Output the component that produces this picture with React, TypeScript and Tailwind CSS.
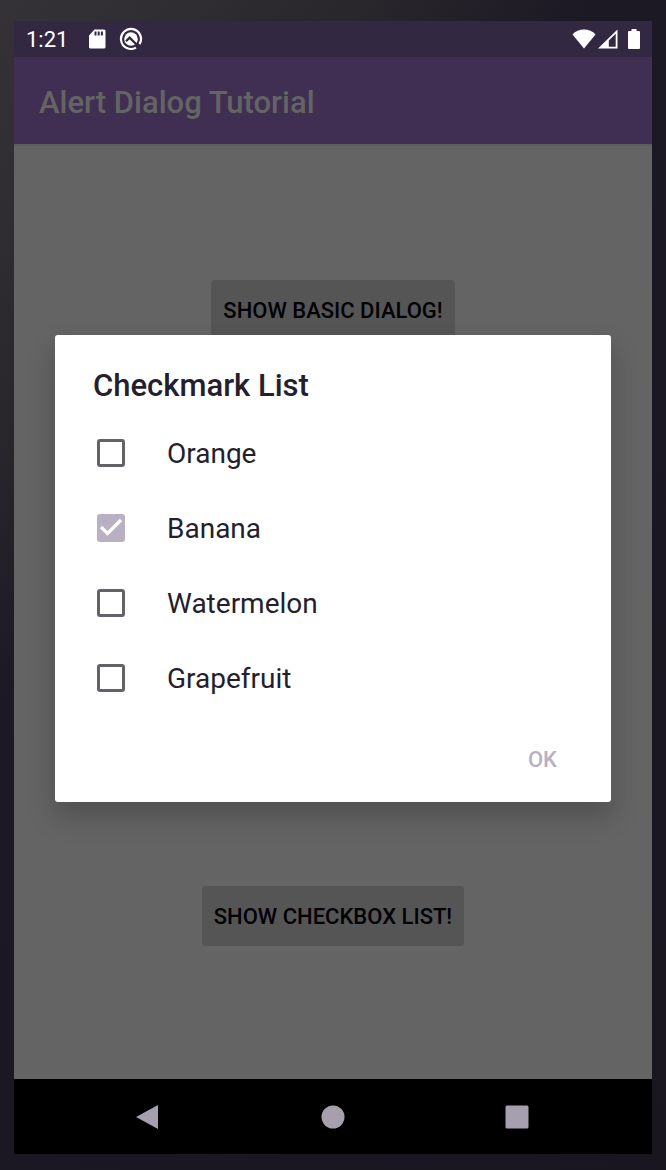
import React from "react";

const fruits = [
  { name: "Orange", checked: false },
  { name: "Banana", checked: true },
  { name: "Watermelon", checked: false },
  { name: "Grapefruit", checked: false },
];

function StatusBar() {
  return (
    <div className="flex h-9 items-center justify-between bg-[#332842] px-3 text-white">
      <div className="flex items-center">
        <span className="pt-0.5 text-[22px] leading-9">1:21</span>
        <svg className="ml-5 h-5 w-[18px]" viewBox="0 0 18 20" fill="currentColor" aria-hidden="true">
          <path
            fillRule="evenodd"
            d="M6.500 0.500H16a1.500 1.500 0 0 1 1.500 1.500V18a1.500 1.500 0 0 1-1.500 1.500H2.500A1.500 1.500 0 0 1 1 18V6.500zM6.500 2.500v4h2v-4zM9.700 2.500v4h2v-4zM12.900 2.500v4h2v-4z"
          />
        </svg>
        <svg className="ml-[13px] h-6 w-6" viewBox="0 0 24 24" fill="none" stroke="currentColor" aria-hidden="true">
          <path d="M17 20.600A10 10 0 1 1 20.500 17.200" strokeWidth="2.200" />
          <circle cx="12" cy="12" r="6.800" fill="currentColor" stroke="none" />
          <path d="M7 14.200L10.600 10.600L20 20" stroke="#332842" strokeWidth="2.200" />
        </svg>
      </div>
      <div className="flex items-center">
        <svg className="h-5 w-6" viewBox="0 0 24 20" fill="currentColor" aria-hidden="true">
          <path d="M12 19.500L0.500 5.500C3.500 2.300 7.500 0.500 12 0.500s8.500 1.800 11.500 5z" />
        </svg>
        <svg className="ml-0.5 h-5 w-5" viewBox="0 0 20 20" fill="currentColor" aria-hidden="true">
          <path fillRule="evenodd" d="M0 19.500L19.500 0.500V19.500zM10.800 11.500V17.700H17.700V4.800z" />
        </svg>
        <svg className="ml-2.5 h-5 w-3" viewBox="0 0 12 20" fill="currentColor" aria-hidden="true">
          <path d="M3.500 0h5v2H11a1 1 0 0 1 1 1v16a1 1 0 0 1-1 1H1a1 1 0 0 1-1-1V3a1 1 0 0 1 1-1h2.500z" />
        </svg>
      </div>
    </div>
  );
}

function ActionButton({ children }: { children: React.ReactNode }) {
  return (
    <button
      type="button"
      className="h-[60px] rounded bg-[#555555] px-3 text-[22px] font-medium text-[#020106] uppercase"
    >
      {children}
    </button>
  );
}

function CheckRow({ name, checked }: { name: string; checked: boolean }) {
  return (
    <label className="flex h-[75px] items-center text-[28px] text-[#241e2d]">
      <span className="grid h-7 w-7 place-items-center">
        <input
          type="checkbox"
          defaultChecked={checked}
          className="peer col-start-1 row-start-1 h-7 w-7 appearance-none rounded-[3px] border-3 border-[#65616a] checked:border-[#b9b0c4] checked:bg-[#b9b0c4]"
        />
        <svg
          className="pointer-events-none col-start-1 row-start-1 h-7 w-7 text-white opacity-0 peer-checked:opacity-100"
          viewBox="0 0 28 28"
          fill="none"
          stroke="currentColor"
          strokeWidth="3.200"
          aria-hidden="true"
        >
          <path d="M4 13L10.500 19.500L24 6" />
        </svg>
      </span>
      <span className="ml-[42px] pt-0.5">{name}</span>
    </label>
  );
}

function ChecklistDialog() {
  return (
    <div
      role="dialog"
      aria-labelledby="dialog-title"
      className="w-full rounded-[3px] bg-white pt-[33px] shadow-[0_14px_26px_2px_rgba(0,0,0,0.18)]"
    >
      <h2 id="dialog-title" className="px-[38px] text-[31px] leading-9 font-medium text-[#241e2d]">
        Checkmark List
      </h2>
      <div className="mt-3 px-[42px]">
        {fruits.map((fruit) => (
          <CheckRow key={fruit.name} name={fruit.name} checked={fruit.checked} />
        ))}
      </div>
      <div className="flex justify-end px-[42px] pt-3.5 pb-3">
        <button type="button" className="h-[60px] px-3 text-[22px] font-medium text-[#b9b0c4]">
          OK
        </button>
      </div>
    </div>
  );
}

function NavBar() {
  return (
    <nav className="flex h-[75px] items-center justify-evenly bg-black text-[#a69fae]">
      <button type="button" aria-label="Back" className="grid h-12 w-12 place-items-center">
        <svg className="h-6 w-7" viewBox="-4 0 28 24" fill="currentColor" aria-hidden="true">
          <path d="M-4 12L18 0V24z" />
        </svg>
      </button>
      <button type="button" aria-label="Home" className="mx-6 grid h-12 w-12 place-items-center">
        <svg className="h-6 w-6" viewBox="0 0 24 24" fill="currentColor" aria-hidden="true">
          <circle cx="12" cy="12" r="11.500" />
        </svg>
      </button>
      <button type="button" aria-label="Recent apps" className="grid h-12 w-12 place-items-center">
        <svg className="h-6 w-6" viewBox="0 0 24 24" fill="currentColor" aria-hidden="true">
          <rect x="0.500" y="0.500" width="23" height="23" rx="1.500" />
        </svg>
      </button>
    </nav>
  );
}

export default function App() {
  return (
    <div className="flex min-h-screen flex-col bg-[#1c1823] bg-[linear-gradient(130deg,#343236_0%,#2f2d31_12%,#29262c_22%,#1d1924_36%,#191620_100%)] px-3.5 pt-[21px] pb-4 font-[Roboto,sans-serif]">
      <StatusBar />
      <div className="relative flex flex-1 flex-col">
        <header className="flex h-[87px] items-center bg-[#402f52] px-[25px] pt-1.5">
          <h1 className="text-[31px] font-medium text-[#646464]">Alert Dialog Tutorial</h1>
        </header>
        <main className="flex flex-1 flex-col items-center justify-between border-t-2 border-[#5c5c5c] bg-[#646464] pt-[134px] pb-[133px]">
          <ActionButton>Show basic dialog!</ActionButton>
          <ActionButton>Show checkbox list!</ActionButton>
        </main>
        <div className="absolute inset-0 flex items-center overflow-hidden px-[41px]">
          <ChecklistDialog />
        </div>
      </div>
      <NavBar />
    </div>
  );
}
